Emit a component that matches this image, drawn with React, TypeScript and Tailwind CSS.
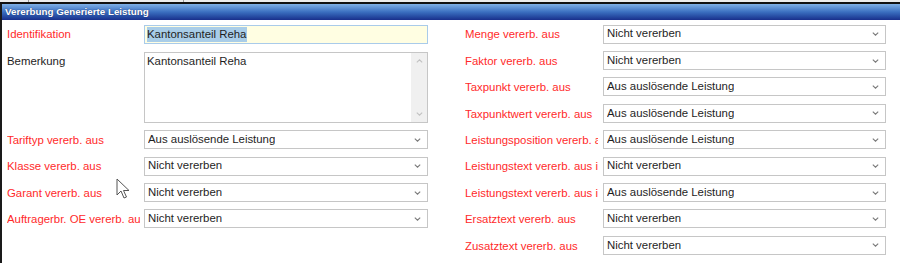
const LEFT_ROWS = [
  { label: "Tariftyp vererb. aus", value: "Aus auslösende Leistung" },
  { label: "Klasse vererb. aus", value: "Nicht vererben" },
  { label: "Garant vererb. aus", value: "Nicht vererben" },
  { label: "Auftragerbr. OE vererb. aus", value: "Nicht vererben" },
];

const RIGHT_ROWS = [
  { label: "Menge vererb. aus", value: "Nicht vererben" },
  { label: "Faktor vererb. aus", value: "Nicht vererben" },
  { label: "Taxpunkt vererb. aus", value: "Aus auslösende Leistung" },
  { label: "Taxpunktwert vererb. aus", value: "Aus auslösende Leistung" },
  { label: "Leistungsposition vererb. aus", value: "Aus auslösende Leistung" },
  { label: "Leistungstext vererb. aus internem Text", value: "Nicht vererben" },
  { label: "Leistungstext vererb. aus internem Text", value: "Aus auslösende Leistung" },
  { label: "Ersatztext vererb. aus", value: "Nicht vererben" },
  { label: "Zusatztext vererb. aus", value: "Nicht vererben" },
];

const Chevron = ({ up = false }: { up?: boolean }) => (
  <svg width="7" height="4" viewBox="0 0 7 4" className={up ? "rotate-180" : ""}>
    <polyline points="0.8,0.6 3.5,3.2 6.2,0.6" fill="none" stroke="currentColor" strokeWidth="1.1" />
  </svg>
);

const Select = ({ value, width }: { value: string; width: string }) => (
  <div
    className={`${width} h-[19px] border border-[#c6c6c6] bg-white flex items-center justify-between pl-[3px] pr-[6px] text-[11.4px] text-[#1e1e1e]`}
  >
    <span className="truncate leading-none">{value}</span>
    <span className="text-[#7a7a7a] flex">
      <Chevron />
    </span>
  </div>
);

const Label = ({ text, width, red = true }: { text: string; width: string; red?: boolean }) => (
  <div
    className={`${width} shrink-0 overflow-hidden whitespace-nowrap text-[11.4px] leading-none pt-[2px] ${
      red ? "text-[#ff2a2a]" : "text-[#1e1e1e]"
    }`}
  >
    {text}
  </div>
);

export default function App() {
  return (
    <div className="relative w-[900px] h-[263px] bg-white overflow-hidden font-['Liberation_Sans',Arial,sans-serif]">
      {/* window strip above */}
      <div className="h-[2px] bg-[#ececec] flex">
        <div className="w-[29px] border-r border-[#9a9a9a]" />
        <div className="w-[155px] border-r border-[#9a9a9a]" />
      </div>
      <div className="h-[2px] bg-[#111]" />

      {/* title bar */}
      <div className="h-[16px] flex items-center pl-[3px] bg-gradient-to-b from-[#7fb0e6] via-[#3b6fc0] to-[#1a2f8c] border-l-2 border-[#1a1a1a]">
        <span className="text-[9.8px] font-bold text-white leading-none [text-shadow:0_0_1px_#1a2a60]">
          Vererbung Generierte Leistung
        </span>
      </div>

      {/* body */}
      <div className="h-[243px] border-l-2 border-[#1a1a1a] pl-[5px] pt-[1px] flex">
        {/* left column */}
        <div className="flex flex-col w-[421px]">
          <div className="h-[26.4px] flex items-center">
            <Label text="Identifikation" width="w-[137px]" />
            <div className="w-[284px] h-[19px] border border-[#a9cbea] bg-[#fffee2] flex items-center pl-[2px] text-[11.4px] text-[#1e1e1e]">
              <span className="bg-[#a9cde8] h-[15px] leading-[15px] pr-[1px]">Kantonsanteil Reha</span>
            </div>
          </div>

          <div className="h-[79.2px] flex">
            <div className="h-[26.4px] flex items-center">
              <Label text="Bemerkung" width="w-[137px]" red={false} />
            </div>
            <div className="mt-[5px] w-[284px] h-[71px] border border-[#c6c6c6] bg-white flex">
              <div className="flex-1 pl-[2px] pt-[1px] text-[11.4px] leading-[14px] text-[#1e1e1e]">
                Kantonsanteil Reha
              </div>
              <div className="w-[16px] bg-[#f0f0f0] flex flex-col items-center justify-between py-[6px] text-[#c2c2c2]">
                <Chevron up />
                <Chevron />
              </div>
            </div>
          </div>

          {LEFT_ROWS.map((r) => (
            <div key={r.label} className="h-[26.4px] flex items-center gap-[4px]">
              <Label text={r.label} width="w-[133px]" />
              <Select value={r.value} width="w-[284px]" />
            </div>
          ))}
        </div>

        {/* right column */}
        <div className="flex flex-col ml-[37px]">
          {RIGHT_ROWS.map((r, i) => (
            <div key={i} className="h-[26.4px] flex items-center gap-[5px]">
              <Label text={r.label} width="w-[133px]" />
              <Select value={r.value} width="w-[283px]" />
            </div>
          ))}
        </div>
      </div>

      {/* mouse pointer */}
      <svg className="absolute left-[116px] top-[178px]" width="14" height="22" viewBox="0 0 14 22">
        <path
          d="M1 1 L1 17 L5 13 L8 20 L10.5 19 L7.5 12.5 L13 12.5 Z"
          fill="white"
          stroke="#555"
          strokeWidth="1"
          strokeLinejoin="round"
        />
      </svg>
    </div>
  );
}
